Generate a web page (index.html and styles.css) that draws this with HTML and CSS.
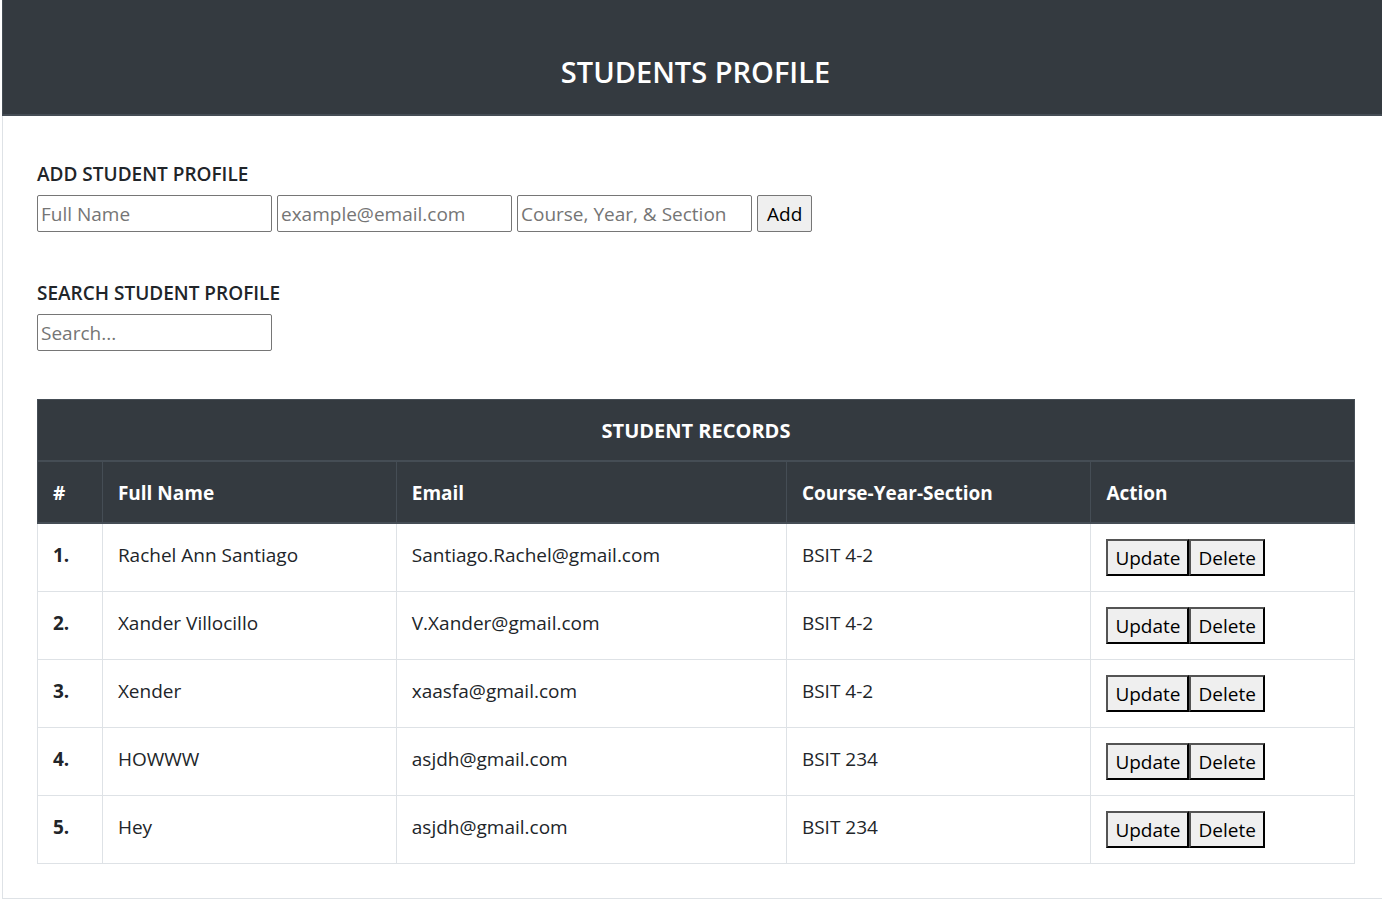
FILE: index.html
```html
<!DOCTYPE html>
<html lang="en">
<head>
<meta charset="utf-8">
<meta name="viewport" content="width=device-width, initial-scale=1">
<title>Students Profile</title>
<link rel="stylesheet" href="styles.css">
</head>
<body>
<div class="page">
  <header class="page-header"><h1 class="page-title">STUDENTS PROFILE</h1></header>
  <main class="content">
    <form class="section">
      <h2 class="section-title">ADD STUDENT PROFILE</h2>
      <div class="fields">
        <input class="field" type="text" placeholder="Full Name" aria-label="Full Name">
        <input class="field" type="email" placeholder="example@email.com" aria-label="Email">
        <input class="field" type="text" placeholder="Course, Year, &amp; Section" aria-label="Course, Year, and Section">
        <button class="add" type="button">Add</button>
      </div>
    </form>
    <form class="section">
      <label class="section-title" for="search">SEARCH STUDENT PROFILE</label>
      <div class="fields"><input class="field" id="search" type="text" placeholder="Search..."></div>
    </form>
    <table class="records">
      <colgroup><col class="col-num"><col class="col-name"><col class="col-email"><col class="col-course"><col class="col-action"></colgroup>
      <thead>
        <tr><th class="records-title" colspan="5">STUDENT RECORDS</th></tr>
        <tr><th scope="col">#</th><th scope="col">Full Name</th><th scope="col">Email</th><th scope="col">Course-Year-Section</th><th scope="col">Action</th></tr>
      </thead>
      <tbody>
        <tr><th scope="row">1.</th><td>Rachel Ann Santiago</td><td>Santiago.Rachel@gmail.com</td><td>BSIT 4-2</td><td class="action-cell"><div class="actions"><button class="action" type="button">Update</button><button class="action" type="button">Delete</button></div></td></tr>
        <tr><th scope="row">2.</th><td>Xander Villocillo</td><td>V.Xander@gmail.com</td><td>BSIT 4-2</td><td class="action-cell"><div class="actions"><button class="action" type="button">Update</button><button class="action" type="button">Delete</button></div></td></tr>
        <tr><th scope="row">3.</th><td>Xender</td><td>xaasfa@gmail.com</td><td>BSIT 4-2</td><td class="action-cell"><div class="actions"><button class="action" type="button">Update</button><button class="action" type="button">Delete</button></div></td></tr>
        <tr><th scope="row">4.</th><td>HOWWW</td><td>asjdh@gmail.com</td><td>BSIT 234</td><td class="action-cell"><div class="actions"><button class="action" type="button">Update</button><button class="action" type="button">Delete</button></div></td></tr>
        <tr><th scope="row">5.</th><td>Hey</td><td>asjdh@gmail.com</td><td>BSIT 234</td><td class="action-cell"><div class="actions"><button class="action" type="button">Update</button><button class="action" type="button">Delete</button></div></td></tr>
      </tbody>
    </table>
  </main>
</div>
</body>
</html>
```
FILE: styles.css
```css
* { box-sizing: border-box; }

body {
  margin: 0;
  background: #fff;
  color: #212529;
  font: 400 19px/30px "Open Sans", "Noto Sans", sans-serif;
}

.page {
  margin-left: 2px;
  border-left: 1px solid #dee2e6;
  border-bottom: 1px solid #dee2e6;
}

.page-header {
  margin-left: -1px;
  padding: 54px 0 24px 6px;
  background: #343a40;
  border-left: 1px solid #454d55;
  border-bottom: 2px solid #454d55;
  color: #fff;
  text-align: center;
}

.page-title {
  margin: 0;
  font-size: 29px;
  line-height: 36px;
  font-weight: 600;
}

.content { padding: 46px 27px 34px 34px; }

.section { margin-bottom: 49px; }

.section + .section { margin-bottom: 48px; }

.section-title {
  display: block;
  margin: 0 0 9px;
  font-size: 19px;
  line-height: 24px;
  font-weight: 600;
}

.fields {
  display: flex;
  flex-wrap: wrap;
  gap: 5px;
}

.field,
.add {
  height: 37px;
  border: 1px solid #767676;
  border-radius: 2px;
  font: inherit;
}

.field {
  width: 235px;
  padding: 0 3px;
  background: #fff;
  color: #212529;
}

.field::placeholder {
  color: #757575;
  opacity: 1;
}

.add {
  padding: 0 9px;
  background: #efefef;
  color: #000;
}

.records {
  width: 100%;
  table-layout: fixed;
  border-collapse: separate;
  border-spacing: 0;
}

.col-num { width: 5%; }
.col-name { width: 22.3%; }
.col-email { width: 29.6%; }
.col-course { width: 23.1%; }

.records th,
.records td {
  padding: 16px 15px 14px;
  border-right: 1px solid #dee2e6;
  border-bottom: 1px solid #dee2e6;
  text-align: left;
  vertical-align: top;
}

.records tr > :first-child { border-left: 1px solid #dee2e6; }

.records .action-cell { padding: 15px; }

.records th { font-weight: 700; }

.records thead th,
.records thead tr > :first-child {
  background: #343a40;
  border-color: #454d55;
  border-bottom-width: 2px;
  color: #fff;
}

.records thead .records-title {
  border-top: 1px solid #454d55;
  font-size: 20px;
  text-align: center;
}

.actions { display: flex; }

.action {
  height: 37px;
  padding: 0 7px;
  border: 2px outset #000;
  background: #efefef;
  color: #000;
  font: inherit;
}
```
